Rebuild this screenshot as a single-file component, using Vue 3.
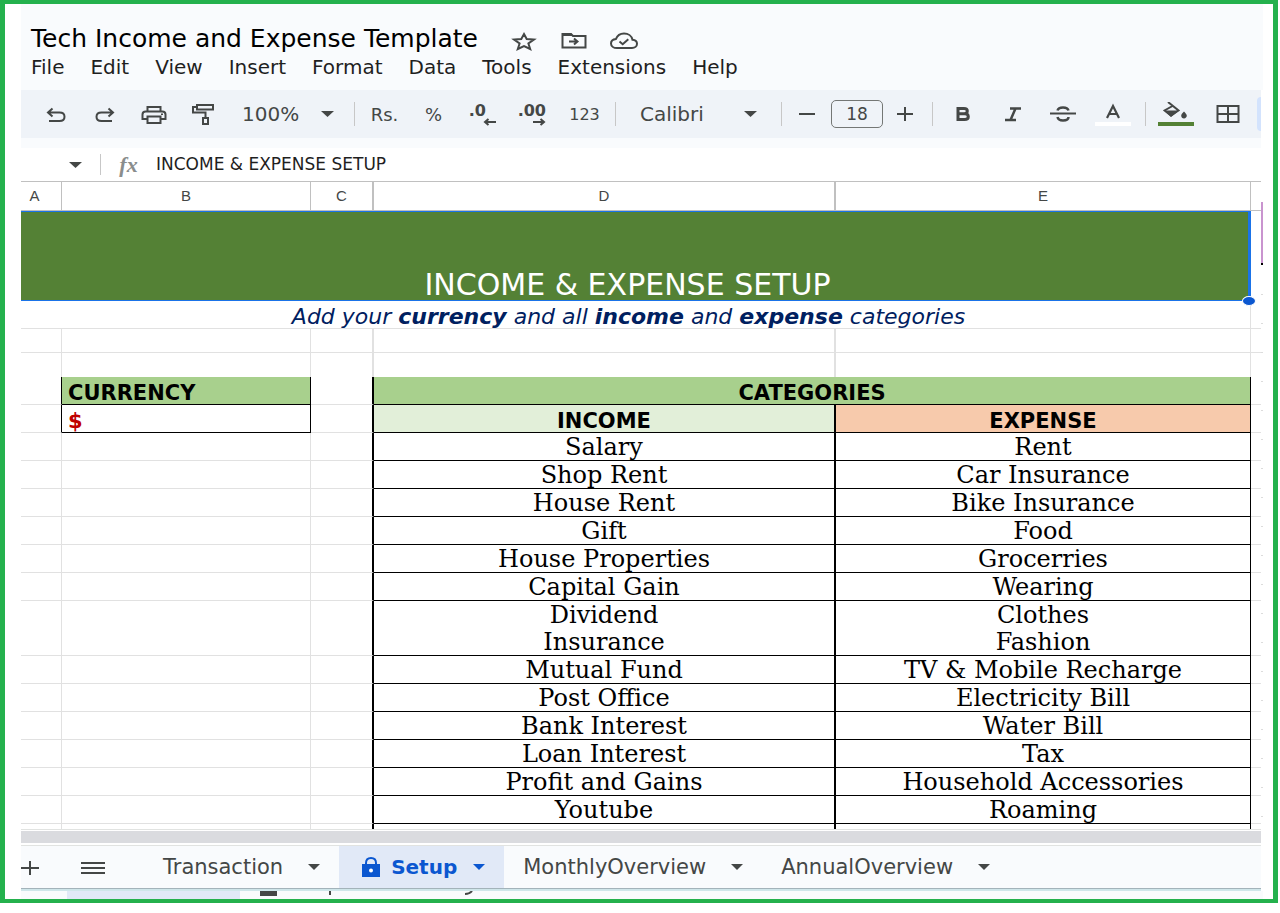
<script setup>
import { ref } from 'vue'

const menus = ['File', 'Edit', 'View', 'Insert', 'Format', 'Data', 'Tools', 'Extensions', 'Help']
const columns = ['A', 'B', 'C', 'D', 'E', '']
const categories = [
  ['Salary', 'Rent'],
  ['Shop Rent', 'Car Insurance'],
  ['House Rent', 'Bike Insurance'],
  ['Gift', 'Food'],
  ['House Properties', 'Grocerries'],
  ['Capital Gain', 'Wearing'],
  ['Dividend', 'Clothes'],
  ['Insurance', 'Fashion'],
  ['Mutual Fund', 'TV & Mobile Recharge'],
  ['Post Office', 'Electricity Bill'],
  ['Bank Interest', 'Water Bill'],
  ['Loan Interest', 'Tax'],
  ['Profit and Gains', 'Household Accessories'],
  ['Youtube', 'Roaming'],
]
const tabs = ['Transaction', 'Setup', 'MonthlyOverview', 'AnnualOverview']
const active = ref('Setup')
const fontSize = ref('18')
const formula = ref('INCOME & EXPENSE SETUP')
</script>

<template>
  <div class="frame">
    <div class="window">
      <header class="top">
        <div class="title-row">
          <h1>Tech Income and Expense Template</h1>
          <button class="plain star" aria-label="Star">
            <svg width="26" height="20" viewBox="0 0 26 20"><path d="M13 3l2.700 5 7.300.5-5.600 4 1.800 5.500L13 15.100 6.800 18l1.800-5.500L3 8.500l7.300-.5z" fill="none" stroke="#444746" stroke-width="2" /></svg>
          </button>
          <button class="plain folder" aria-label="Move">
            <svg width="26" height="18" viewBox="0 0 26 18"><path d="M1.500 3v12.500h23V4H12L10 2H1.500z" fill="none" stroke="#444746" stroke-width="2" /><path d="M1 1h9l2 3H1z" fill="#444746" /><path d="M8 9.500h8M13 6.500l3.500 3-3.500 3" fill="none" stroke="#444746" stroke-width="2" /></svg>
          </button>
          <button class="plain cloud" aria-label="Saved">
            <svg width="28" height="18" viewBox="0 0 28 18"><path d="M7 16C3.500 16 1 14 1 11.400 1 9 3.200 7.200 6 6.900 7.200 3.700 10.300 1.500 14 1.500c4.300 0 7.800 2.600 8.500 6.200 2.600.2 4.500 1.900 4.500 4.100 0 2.400-2.200 4.200-5 4.200z" fill="none" stroke="#444746" stroke-width="2" /><path d="M9.500 9.500l3.200 2.700 5.600-5" fill="none" stroke="#444746" stroke-width="2" /></svg>
          </button>
        </div>
        <nav class="menu">
          <button v-for="m in menus" :key="m" class="plain">{{ m }}</button>
        </nav>
      </header>

      <div class="toolbar">
        <button class="tool" aria-label="Undo">
          <svg width="20" height="18" viewBox="0 0 20 18"><path d="M3 16h10.500c3 0 5-1.700 5-4.300s-2-4.200-5-4.200H2M6.500 3.500L2 7.500l4.500 4" fill="none" stroke="#444746" stroke-width="2" /></svg>
        </button>
        <button class="tool" aria-label="Redo">
          <svg width="20" height="18" viewBox="0 0 20 18"><path d="M17 16H6.500c-3 0-5-1.700-5-4.300s2-4.200 5-4.200H18M13.500 3.500l4.500 4-4.500 4" fill="none" stroke="#444746" stroke-width="2" /></svg>
        </button>
        <button class="tool" aria-label="Print">
          <svg width="26" height="20" viewBox="0 0 26 20"><path d="M6.500 7V3h13v4M6.500 15H1.500v-4.500c0-2 1.200-3 3.200-3h16.600c2 0 3.200 1 3.200 3V15h-5M6.500 12.500h13V19h-13z" fill="none" stroke="#444746" stroke-width="2" /><path d="M20 9.500h2V11h-2z" fill="#444746" /></svg>
        </button>
        <button class="tool" aria-label="Paint format">
          <svg width="24" height="22" viewBox="0 0 24 22"><path d="M6 2h16v4.500H6zM6 4H2v5.500h12.500v5M12 15h5v6h-5z" fill="none" stroke="#444746" stroke-width="2" /></svg>
        </button>
        <label class="drop zoom">
          <select aria-label="Zoom"><option>100%</option></select>
          <svg width="13" height="6" viewBox="0 0 13 6"><path d="M0 0h13L6.500 6z" fill="#444746" /></svg>
        </label>
        <i class="sep after-small"></i>
        <button class="tool text">Rs.</button>
        <button class="tool text">%</button>
        <button class="tool decimals fewer" aria-label="Decrease decimal places">
          <span>.0</span>
          <svg width="13" height="8" viewBox="0 0 13 8"><path d="M13 4H2M5.500 1L2 4l3.500 3" fill="none" stroke="#444746" stroke-width="2" /></svg>
        </button>
        <button class="tool decimals" aria-label="Increase decimal places">
          <span>.00</span>
          <svg width="13" height="8" viewBox="0 0 13 8"><path d="M0 4h11M7.500 1L11 4 7.500 7" fill="none" stroke="#444746" stroke-width="2" /></svg>
        </button>
        <button class="tool formats">123</button>
        <i class="sep"></i>
        <label class="drop font">
          <select aria-label="Font"><option>Calibri</option></select>
          <svg width="13" height="6" viewBox="0 0 13 6"><path d="M0 0h13L6.500 6z" fill="#444746" /></svg>
        </label>
        <i class="sep"></i>
        <button class="tool" aria-label="Decrease font size">
          <svg width="16" height="16" viewBox="0 0 16 16"><path d="M0 8h16" stroke="#444746" stroke-width="2" /></svg>
        </button>
        <input v-model="fontSize" class="size" aria-label="Font size" />
        <button class="tool plus" aria-label="Increase font size">
          <svg width="16" height="14" viewBox="0 0 16 14"><path d="M0 7h16M8 0v14" stroke="#444746" stroke-width="2" /></svg>
        </button>
        <i class="sep after-small"></i>
        <button class="tool style" aria-label="Bold">
          <svg width="18" height="16" viewBox="0 0 18 16"><path d="M4 2.500h6c2.200 0 3.300.9 3.300 2.600S12.200 7.800 10 7.800H4zM4 7.800h6.500c2.500 0 3.800 1 3.800 2.900s-1.300 2.800-3.800 2.800H4z" fill="none" stroke="#444746" stroke-width="3" /></svg>
        </button>
        <button class="tool style" aria-label="Italic">
          <svg width="16" height="16" viewBox="0 0 16 16"><path d="M5 2.500h11M0 14h11M10.500 2.500l-5 11.500" fill="none" stroke="#444746" stroke-width="2.500" /></svg>
        </button>
        <button class="tool style" aria-label="Strikethrough">
          <svg width="26" height="18" viewBox="0 0 26 18"><path d="M0 8.500h26" stroke="#444746" stroke-width="2" /><path d="M18.500 5.500C18 3.700 16 2.500 13 2.500c-3.200 0-5 1.200-5.500 3M7.500 12c.5 2.300 2.500 3.500 5.500 3.500 3.300 0 5.500-1.200 5.500-3.500" fill="none" stroke="#444746" stroke-width="2.500" /></svg>
        </button>
        <button class="tool swatch" aria-label="Text color">
          <svg width="16" height="18" viewBox="0 0 16 18"><path d="M2 16L8 4l6 12M4.500 12h7" fill="none" stroke="#444746" stroke-width="2.200" /></svg>
          <span class="bar white"></span>
        </button>
        <i class="sep after-wide"></i>
        <button class="tool swatch" aria-label="Fill color">
          <svg width="26" height="18" viewBox="0 0 26 18"><path d="M5 0l10.500 8.500-7.500 5-6.500-5L9.500 4" fill="none" stroke="#444746" stroke-width="2" /><path d="M1 8.500h15L8 15z" fill="#444746" /><path d="M21 9.500c1.800 2 2.800 3 2.800 4.300S22.600 16.500 21 16.500s-2.800-1.200-2.800-2.700 1-2.300 2.800-4.300z" fill="#444746" /></svg>
          <span class="bar green"></span>
        </button>
        <button class="tool grid-tool" aria-label="Borders">
          <svg width="24" height="20" viewBox="0 0 24 20"><path d="M1.500 2h21v16h-21zM12 2v16M1.500 10h21" fill="none" stroke="#444746" stroke-width="2" /></svg>
        </button>
        <i class="peek"></i>
      </div>

      <div class="formula">
        <button class="plain name-box" aria-label="Name box">
          <svg width="13" height="6" viewBox="0 0 13 6"><path d="M0 0h13L6.500 6z" fill="#444746" /></svg>
        </button>
        <i class="sep"></i>
        <label for="fx" class="fx">fx</label>
        <input id="fx" v-model="formula" />
      </div>

      <div class="body">
        <table>
          <colgroup>
            <col class="ca" /><col class="cb" /><col class="cc" /><col class="cd" /><col /><col class="cf" />
          </colgroup>
          <thead>
            <tr><th v-for="(c, i) in columns" :key="i" scope="col">{{ c }}</th></tr>
          </thead>
          <tbody>
            <tr class="banner">
              <td colspan="5"><span>INCOME &amp; EXPENSE SETUP</span><i class="handle"></i></td>
              <td></td>
            </tr>
            <tr class="subtitle">
              <td colspan="5">Add your <b>currency</b> and all <b>income</b> and <b>expense</b> categories</td>
              <td></td>
            </tr>
            <tr class="short"><td v-for="n in 6" :key="n"></td></tr>
            <tr class="short open"><td v-for="n in 6" :key="n"></td></tr>
            <tr>
              <td class="dark-edge"></td>
              <td class="box label green-fill">CURRENCY</td>
              <td class="dark-edge"></td>
              <td colspan="2" class="box head green-fill">CATEGORIES</td>
              <td></td>
            </tr>
            <tr>
              <td class="dark-edge"></td>
              <td class="box label red">$</td>
              <td class="dark-edge"></td>
              <td class="box head income">INCOME</td>
              <td class="box head expense">EXPENSE</td>
              <td></td>
            </tr>
            <tr v-for="(row, i) in categories" :key="row[0]" :class="{ joined: i === 6 }">
              <td></td>
              <td></td>
              <td class="dark-edge"></td>
              <td class="box item">{{ row[0] }}</td>
              <td class="box item">{{ row[1] }}</td>
              <td></td>
            </tr>
            <tr class="last">
              <td></td><td></td><td class="dark-edge"></td><td class="box"></td><td class="box"></td><td></td>
            </tr>
          </tbody>
        </table>
        <div class="edge"><i class="violet"></i><i class="ticks"></i></div>
      </div>

      <div class="scroll"><div></div></div>

      <nav class="tabs">
        <button class="plain add" aria-label="Add sheet">
          <svg width="18" height="14" viewBox="0 0 18 14"><path d="M0 7h18M9 0v14" stroke="#444746" stroke-width="2" /></svg>
        </button>
        <button class="plain all" aria-label="All sheets">
          <svg width="24" height="12" viewBox="0 0 24 12"><path d="M0 1h24M0 6h24M0 11h24" stroke="#444746" stroke-width="2" /></svg>
        </button>
        <button v-for="t in tabs" :key="t" class="plain tab" :class="{ active: t === active }" @click="active = t">
          <svg v-if="t === 'Setup'" width="20" height="20" viewBox="0 0 20 20"><path d="M5 8V6c0-3 2-5 5-5s5 2 5 5v2" fill="none" stroke="#0b57d0" stroke-width="2" /><path d="M1 7h18v13H1z" fill="#0b57d0" /><circle cx="10" cy="13.500" r="2" fill="#fff" /></svg>
          <span>{{ t }}</span>
          <svg width="12" height="6" viewBox="0 0 12 6"><path d="M0 0h12L6 6z" fill="currentColor" /></svg>
        </button>
      </nav>
      <div class="under" aria-hidden="true">
        <i class="pale"></i><i class="lock"></i><i class="stem"></i>
        <svg width="8" height="4" viewBox="0 0 8 4"><path d="M7 0C5.500 2 4 3 0 3" fill="none" stroke="#444746" stroke-width="2" /></svg>
      </div>
    </div>
  </div>
</template>

<style>
body { margin: 0; background: #fff; }
</style>

<style scoped>
* { box-sizing: border-box; }
.frame {
  margin-right: 2px;
  border: solid #24b14d;
  border-width: 4px 5px;
  padding: 0 10px 0 16px;
  font-family: "DejaVu Sans", sans-serif;
  color: #1f1f1f;
}
button, input, select { font: inherit; color: inherit; }
.plain, .tool { border: 0; padding: 0; background: none; display: flex; align-items: center; justify-content: center; }
svg { display: block; flex: none; }

.top { background: #f9fbfd; padding: 20px 0 10px 10px; }
.title-row { display: flex; align-items: center; height: 30px; }
.title-row button { padding-top: 3px; }
h1 { margin: 0; font-size: 25px; line-height: 30px; font-weight: 400; color: #000; white-space: nowrap; }
.star { margin-left: 33px; }
.folder { margin-left: 24px; }
.cloud { margin-left: 23px; }
.menu { display: flex; gap: 26px; height: 26px; font-size: 20px; }

.toolbar { display: flex; align-items: center; height: 48px; padding-left: 10px; background: #eff3f8; color: #444746; margin-right: 2px; }
.tool { width: 49px; height: 36px; flex: none; }
.text { font-size: 18px; }
.sep { width: 1px; height: 24px; background: #c7c7c7; flex: none; }
.after-small { margin-right: 5px; }
.after-wide { margin: 0 5px 0 7px; }
.drop { display: flex; align-items: center; flex: none; font-size: 20px; }
.drop select { appearance: none; border: 0; padding: 0; background: none; height: 36px; }
.drop svg { margin-left: -8px; pointer-events: none; }
.zoom { width: 127px; padding-left: 15px; }
.zoom select { width: 87px; }
.font { width: 165px; padding-left: 24px; }
.font select { width: 112px; }
.decimals { flex-direction: column; align-items: flex-end; padding-right: 12px; font-size: 16px; line-height: 16px; font-weight: 700; width: 50px; }
.decimals svg { margin-top: -1px; }
.fewer span { padding-right: 10px; }
.formats { width: 57px; padding-right: 4px; font-size: 16px; }
.size { width: 52px; height: 28px; border: 1px solid #747775; border-radius: 5px; background: none; text-align: center; font-size: 17px; padding: 0; }
.plus { width: 44px; margin-right: 5px; }
.style { width: 50px; }
.swatch { flex-direction: column; gap: 2px; width: 50px; }
.bar { width: 36px; height: 4px; }
.white { background: #fff; }
.green { background: #548135; }
.grid-tool { width: 54px; }
.peek { width: 4px; height: 34px; margin-left: auto; background: #d3e3fd; border-radius: 4px 0 0 4px; }

.formula { display: flex; align-items: center; height: 43px; border-top: 10px solid #f9fbfd; margin-right: 2px; }
.name-box { width: 79px; height: 32px; padding-left: 29px; }
.formula .sep { height: 21px; }
.fx { width: 55px; text-align: center; font: italic 700 22px/32px "Liberation Serif", serif; color: #8a8d8c; }
.formula input { flex: 1; min-width: 0; border: 0; padding: 0 0 2px; background: none; font-size: 17px; height: 32px; }

.body { display: flex; }
table { flex: 1; min-width: 0; table-layout: fixed; border-collapse: separate; border-spacing: 0; border-top: 1px solid #c0c0c0; }
.ca { width: 41px; }
.cb { width: 249px; }
.cc { width: 63px; }
.cd { width: 462px; }
.cf { width: 10px; }
th { height: 29px; padding: 0; border: solid #c0c0c0; border-width: 0 1px 1px 0; font: 400 15px/20px "Liberation Sans", sans-serif; color: #444746; }
th:first-child { padding-right: 13px; }
th:nth-child(3), th:nth-child(4) { border-right-width: 2px; }
td { height: 28px; padding: 0; border: solid #e1e1e1; border-width: 0 1px 1px 0; line-height: 27px; white-space: nowrap; overflow: hidden; }
th:last-child, td:last-child { border-right: 0; }
.short td:nth-child(3), .short td:nth-child(4) { border-right-width: 2px; }
.short td { height: 24px; }
.open td { border-bottom: 0; }
.banner td { height: 90px; border-bottom: 0; }
.banner td:first-child { position: relative; overflow: visible; vertical-align: bottom; text-align: center; padding-right: 14px; background: #548135; color: #fff; font-size: 30px; line-height: 30px; border: solid #1a73e8; border-width: 1px 3px 1px 0; }
.handle { position: absolute; right: -8px; bottom: -6px; width: 14px; height: 10px; border: 1px solid #fff; border-radius: 50%; background: #0b57d0; }
.subtitle td:first-child { text-align: center; padding: 5px 14px 0 0; font-size: 22px; line-height: 22px; font-style: italic; color: #002060; }
td.dark-edge { border-right-color: #000; }
td.dark-edge:nth-child(3) { border-right-width: 2px; }
.box { border-color: #000; }
.box:nth-child(4):not([colspan]) { border-right-width: 2px; }
.label, .head { padding-top: 5px; font-weight: 700; font-size: 21px; line-height: 22px; color: #000; }
.label { padding-left: 6px; }
.head { text-align: center; }
.green-fill { background: #a8d08d; }
.income { background: #e2efd9; }
.expense { background: #f7caac; }
.red { color: #c00000; }
.item { text-align: center; padding-top: 2px; font-family: "DejaVu Serif", serif; font-size: 24px; line-height: 25px; color: #000; }
.joined td { height: 27px; border-bottom: 0; }
.last td { height: 5px; border-bottom: 0; }
.edge { width: 2px; padding-top: 21px; display: flex; flex-direction: column; }
.violet { height: 63px; background: #c994cf; border-bottom: 2px solid #000; }
.ticks { flex: 1; margin-top: 29px; background: repeating-linear-gradient(#dcdcdc 0 1px, transparent 1px 29px); }

.scroll { height: 17px; margin-right: 2px; border: solid #e1e3e1; border-width: 1px 0; padding-top: 1px; }
.scroll div { height: 12px; background: #dadbdf; }
.tabs { display: flex; height: 45px; margin-right: 2px; background: #f9fbfd; border-bottom: 2px solid #cfe6ea; box-shadow: inset 0 -1px #a3b3ba; color: #444746; font-size: 21px; }
.add { width: 18px; }
.all { width: 24px; margin-left: 42px; }
.tab { gap: 25px; padding: 0 19px; height: 42px; }
.all + .tab { margin-left: 39px; }
.tab.active { gap: 16px; padding: 0 19px 0 22px; background: #e1e9f7; color: #0b57d0; font-weight: 700; font-size: 20px; }
.active svg:first-child { margin-right: -6px; }
.under { display: flex; align-items: flex-start; height: 8px; background: #f9fbfd; }
.pale { width: 173px; height: 8px; margin-left: 46px; background: #e1e9f7; }
.lock { width: 17px; height: 5px; margin-left: 20px; background: #444746; }
.stem { width: 2px; height: 4px; margin: 0 134px 0 52px; background: #444746; }
</style>
